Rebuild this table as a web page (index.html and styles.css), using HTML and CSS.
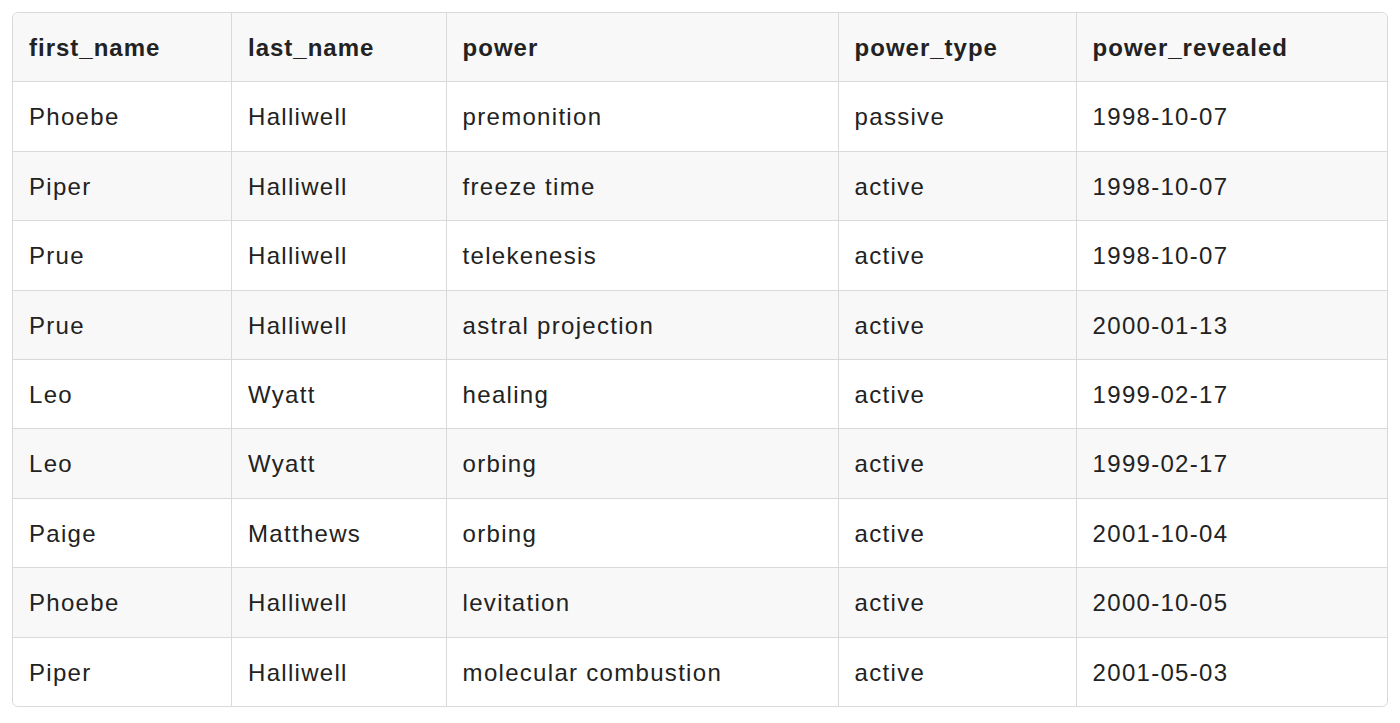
FILE: index.html
```html
<!DOCTYPE html>
<html>
<head>
<meta charset="utf-8">
<link rel="stylesheet" href="styles.css">
</head>
<body>
<div class="wrap">
<table class="grid">
<colgroup>
<col class="c1"><col class="c2"><col class="c3"><col class="c4"><col class="c5">
</colgroup>
<thead>
<tr><th>first_name</th><th>last_name</th><th>power</th><th>power_type</th><th>power_revealed</th></tr>
</thead>
<tbody>
<tr><td>Phoebe</td><td>Halliwell</td><td>premonition</td><td>passive</td><td>1998-10-07</td></tr>
<tr><td>Piper</td><td>Halliwell</td><td>freeze time</td><td>active</td><td>1998-10-07</td></tr>
<tr><td>Prue</td><td>Halliwell</td><td>telekenesis</td><td>active</td><td>1998-10-07</td></tr>
<tr><td>Prue</td><td>Halliwell</td><td>astral projection</td><td>active</td><td>2000-01-13</td></tr>
<tr><td>Leo</td><td>Wyatt</td><td>healing</td><td>active</td><td>1999-02-17</td></tr>
<tr><td>Leo</td><td>Wyatt</td><td>orbing</td><td>active</td><td>1999-02-17</td></tr>
<tr><td>Paige</td><td>Matthews</td><td>orbing</td><td>active</td><td>2001-10-04</td></tr>
<tr><td>Phoebe</td><td>Halliwell</td><td>levitation</td><td>active</td><td>2000-10-05</td></tr>
<tr><td>Piper</td><td>Halliwell</td><td>molecular combustion</td><td>active</td><td>2001-05-03</td></tr>
</tbody>
</table>
</div>
</body>
</html>
```
FILE: styles.css
```css
html, body {
  margin: 0;
  padding: 0;
  background: #ffffff;
}
body {
  padding: 12px 14px 0 12px;
  font-family: "Liberation Sans", Arial, sans-serif;
  color: #222222;
}
.wrap {
  width: 1374px;
  border: 1px solid #d9d9d9;
  border-radius: 6px;
  overflow: hidden;
}
.grid {
  width: 100%;
  border-collapse: separate;
  border-spacing: 0;
  table-layout: fixed;
}
.c1 { width: 219px; }
.c2 { width: 214.6px; }
.c3 { width: 392px; }
.c4 { width: 238px; }
.c5 { width: 310.4px; }
.grid th,
.grid td {
  text-align: left;
  font-size: 24px;
  letter-spacing: 1.3px;
  line-height: 36.4px;
  padding: 17px 10px 15px 16px;
  border-right: 1px solid #d9d9d9;
  border-bottom: 1px solid #d9d9d9;
  white-space: nowrap;
}
.grid th:last-child,
.grid td:last-child {
  border-right: none;
}
.grid tbody tr:last-child td {
  border-bottom: none;
}
.grid th {
  font-weight: bold;
  letter-spacing: 1px;
  background: #f8f8f8;
}
.grid tbody tr:nth-child(even) td {
  background: #f8f8f8;
}
```
